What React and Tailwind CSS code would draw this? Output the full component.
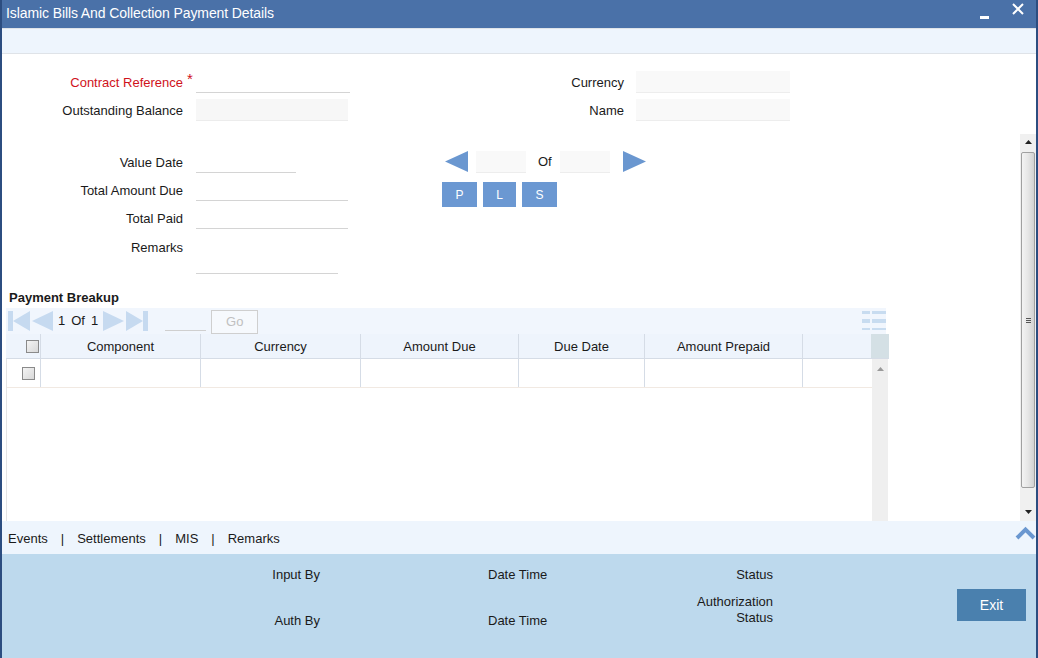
import React from "react";

const Field = ({ label, width = "w-[154px]", filled, required, className = "" }) => (
  <div className={`flex items-center h-[22px] ${className}`}>
    <span className={`w-[181px] text-right pt-[2px] ${required ? "text-[#d0121b]" : "text-[#1a1a1a]"}`}>{label}</span>
    <span className="w-[13px] self-start text-[#d0121b] text-[15px] leading-[16px] pl-[4px]">{required ? "*" : ""}</span>
    <div className={`${width} h-[22px] border-b ${filled ? "bg-[#f7f7f7] border-[#ececec]" : "border-[#d4d4d4]"}`} />
  </div>
);

const RightField = ({ label, className = "" }) => (
  <div className={`flex items-center h-[22px] ${className}`}>
    <span className="w-[224px] text-right text-[#1a1a1a] pt-[2px]">{label}</span>
    <div className="ml-[12px] w-[154px] h-[22px] bg-[#f9f9f9] border-b border-[#ededed]" />
  </div>
);

const Tri = ({ dir, className = "", color = "#6a97d0", w = 23, h = 21, bar }) => (
  <svg width={w} height={h} viewBox={`0 0 ${w} ${h}`} className={className}>
    {dir === "left" ? (
      <>
        {bar && <rect x="0" y="0" width="5" height={h} fill={color} />}
        <polygon points={`${bar ? 5 : 0},${h / 2} ${w},0 ${w},${h}`} fill={color} />
      </>
    ) : (
      <>
        <polygon points={`0,0 ${bar ? w - 5 : w},${h / 2} 0,${h}`} fill={color} />
        {bar && <rect x={w - 5} y="0" width="5" height={h} fill={color} />}
      </>
    )}
  </svg>
);

const Check = () => (
  <div className="w-[13px] h-[13px] border border-[#8a8a8a] bg-gradient-to-br from-[#f4f4f4] to-[#d8d8d8]" />
);

const cols = [
  { label: "Component", w: "w-[160px]" },
  { label: "Currency", w: "w-[160px]" },
  { label: "Amount Due", w: "w-[158px]" },
  { label: "Due Date", w: "w-[126px]" },
  { label: "Amount Prepaid", w: "w-[158px]" },
  { label: "", w: "w-[68px]" },
];

export default function App() {
  return (
    <div className="w-[1038px] h-[658px] overflow-hidden flex flex-col border-x-2 border-[#2c4d80] bg-white font-['Liberation_Sans',Arial,sans-serif] text-[13px] text-[#1a1a1a]">
      {/* Title bar */}
      <div className="h-[28px] shrink-0 bg-[#4a71a8] flex items-center pl-[4px] text-white">
        <span className="text-[14px] tracking-[-0.1px] -mt-[2px]">Islamic Bills And Collection Payment Details</span>
        <div className="ml-auto w-[9px] h-[3px] bg-white mt-[6px]" />
        <svg width="12" height="12" viewBox="0 0 12 12" className="ml-[23px] mr-[12px] -mt-[10px]">
          <path d="M1 1L11 11M11 1L1 11" stroke="white" strokeWidth="2" />
        </svg>
      </div>
      <div className="h-[26px] shrink-0 bg-[#eef5fd] border-t border-[#8ea4bf] border-b border-[#dfe3e8]" />

      {/* Body */}
      <div className="flex-1 flex min-h-0">
        <div className="flex-1 flex flex-col pt-[17px] min-w-0">
          <div className="flex">
            <div className="w-[398px]">
              <Field label="Contract Reference" required />
              <Field label="Outstanding Balance" width="w-[152px]" filled className="mt-[6px]" />
              <Field label="Value Date" width="w-[100px]" className="mt-[30px]" />
              <Field label="Total Amount Due" width="w-[152px]" className="mt-[6px]" />
              <Field label="Total Paid" width="w-[152px]" className="mt-[6px]" />
              <div className="flex mt-[6px] h-[39px]">
                <span className="w-[181px] text-right leading-[22px] pt-[2px]">Remarks</span>
                <span className="w-[13px]" />
                <div className="w-[142px] border-b border-[#d4d4d4]" />
              </div>
            </div>
            <div className="flex-1">
              <RightField label="Currency" />
              <RightField label="Name" className="mt-[6px]" />
              <div className="flex items-center mt-[29px] pl-[45px] h-[23px]">
                <Tri dir="left" />
                <div className="ml-[8px] w-[50px] h-[22px] bg-[#f9f9f9] border-b border-[#ededed]" />
                <span className="ml-[12px]">Of</span>
                <div className="ml-[8px] w-[50px] h-[22px] bg-[#f9f9f9] border-b border-[#ededed]" />
                <Tri dir="right" className="ml-[13px]" />
              </div>
              <div className="flex mt-[9px] pl-[42px] gap-[6px] text-white text-[12px]">
                <div className="w-[35px] h-[25px] bg-[#6b98d2] flex items-center justify-center">P</div>
                <div className="w-[33px] h-[25px] bg-[#6b98d2] flex items-center justify-center">L</div>
                <div className="w-[35px] h-[25px] bg-[#6b98d2] flex items-center justify-center">S</div>
              </div>
            </div>
          </div>

          {/* Payment Breakup */}
          <div className="ml-[4px] w-[883px] flex-1 flex flex-col mt-[15px] min-h-0">
            <div className="pl-[3px] font-bold leading-[16px] pt-[1px]">Payment Breakup</div>
            <div className="mt-[2px] h-[26px] w-[880px] bg-[#f1f6fd] flex items-center">
              <Tri dir="left" bar color="#c6daf0" w={22} h={20} className="ml-[2px]" />
              <Tri dir="left" color="#c6daf0" w={21} h={20} className="ml-[2px]" />
              <span className="ml-[5px] flex gap-[6px]"><span>1</span><span>Of</span><span>1</span></span>
              <Tri dir="right" color="#c6daf0" w={21} h={20} className="ml-[5px]" />
              <Tri dir="right" bar color="#c6daf0" w={22} h={20} className="ml-[2px]" />
              <div className="ml-[17px] w-[41px] h-[23px] border-b border-[#cfcfcf] self-start" />
              <div className="ml-[5px] w-[47px] h-[24px] border border-[#cfcfcf] bg-[#f6f9fd] text-[#c0c0c0] flex items-center justify-center self-start mt-[2px]">
                Go
              </div>
              <svg width="24" height="20" viewBox="0 0 24 20" className="ml-auto">
                <g fill="#c8dcf0">
                  <rect x="0" y="0" width="8" height="3" />
                  <rect x="10" y="0" width="14" height="3" />
                  <rect x="0" y="8" width="8" height="4" />
                  <rect x="10" y="8" width="14" height="4" />
                  <rect x="0" y="17" width="8" height="2" />
                  <rect x="10" y="17" width="14" height="2" />
                </g>
              </svg>
            </div>
            <div className="flex h-[25px] bg-[#eef4fc] border-b border-[#d5dce6]">
              <div className="w-[35px] flex items-center justify-end pr-[1px] border-r border-[#d5dce6]">
                <Check />
              </div>
              {cols.map((c, i) => (
                <div key={i} className={`${c.w} flex items-center justify-center pt-[2px] ${i < 5 ? "border-r border-[#d5dce6]" : ""}`}>
                  {c.label}
                </div>
              ))}
              <div className="w-[18px] bg-[#d4e0e5]" />
            </div>
            <div className="flex-1 flex border-l border-[#e4e4e4]">
              <div className="flex-1">
                <div className="flex h-[29px] border-b border-[#f1e9e2]">
                  <div className="w-[34px] flex items-center justify-end pr-[5px] border-r border-[#d5dce6]">
                    <Check />
                  </div>
                  {cols.map((c, i) => (
                    <div key={i} className={`${c.w} ${i < 5 ? "border-r border-[#d5dce6]" : ""}`} />
                  ))}
                </div>
              </div>
              <div className="w-[16px] mr-[1px] bg-[#efefef] flex justify-center pt-[8px]">
                <svg width="7" height="4" viewBox="0 0 7 4">
                  <polygon points="0,4 3.5,0 7,4" fill="#9a9a9a" />
                </svg>
              </div>
            </div>
          </div>
        </div>

        {/* Right scrollbar */}
        <div className="w-[16px] mt-[80px] bg-[#f0f0f0] flex flex-col">
          <div className="h-[16px] flex items-center justify-center">
            <svg width="7" height="4" viewBox="0 0 7 4">
              <polygon points="0,4 3.5,0 7,4" fill="#222" />
            </svg>
          </div>
          <div className="mt-[2px] mx-[1px] h-[336px] border border-[#a0a0a0] rounded-[2px] bg-gradient-to-r from-[#f3f3f3] via-[#e6e6e6] to-[#d2d2d2] flex flex-col items-center justify-center gap-[1px]">
            <div className="w-[5px] h-[1px] bg-[#555]" />
            <div className="w-[5px] h-[1px] bg-[#555]" />
            <div className="w-[5px] h-[1px] bg-[#555]" />
          </div>
          <div className="flex-1 flex items-end justify-center pb-[7px]">
            <svg width="7" height="4" viewBox="0 0 7 4">
              <polygon points="0,0 3.5,4 7,0" fill="#222" />
            </svg>
          </div>
        </div>
      </div>

      {/* Tabs */}
      <div className="h-[33px] shrink-0 bg-[#eef5fd] flex items-center pl-[6px]">
        <div className="flex pt-[3px]">
          <span>Events</span>
          <span className="mx-[13px]">|</span>
          <span>Settlements</span>
          <span className="mx-[13px]">|</span>
          <span>MIS</span>
          <span className="mx-[13px]">|</span>
          <span>Remarks</span>
        </div>
        <svg width="21" height="14" viewBox="0 0 21 14" className="ml-auto -mt-[10px]">
          <polyline points="2,12 10.5,3.5 19,12" fill="none" stroke="#6a97d0" strokeWidth="4" />
        </svg>
      </div>

      {/* Audit panel */}
      <div className="h-[104px] shrink-0 bg-[#bdd9ed] flex leading-[16px]">
        <div className="w-[318px] flex flex-col items-end pt-[13px]">
          <span>Input By</span>
          <span className="mt-[30px]">Auth By</span>
        </div>
        <div className="ml-[168px] w-[60px] flex flex-col pt-[13px]">
          <span>Date Time</span>
          <span className="mt-[30px]">Date Time</span>
        </div>
        <div className="w-[225px] flex flex-col items-end text-right pt-[13px]">
          <span>Status</span>
          <span className="mt-[11px]">Authorization<br />Status</span>
        </div>
        <div className="ml-[184px] mt-[35px] w-[69px] h-[32px] bg-[#4a80ae] text-white text-[14px] flex items-center justify-center">
          Exit
        </div>
      </div>
    </div>
  );
}
